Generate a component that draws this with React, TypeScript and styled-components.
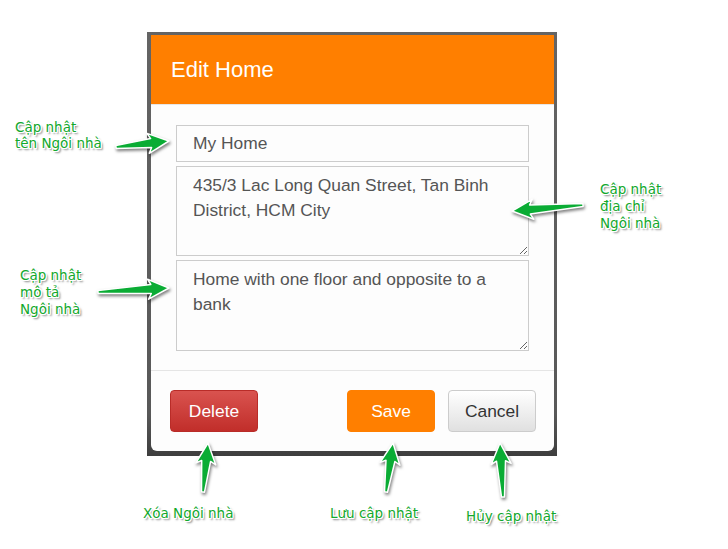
import React from "react";
import styled, { createGlobalStyle } from "styled-components";

const Global = createGlobalStyle`
  html, body { margin: 0; padding: 0; background: #ffffff; }
  body { font-family: "Liberation Sans", Arial, sans-serif; }
`;

const Canvas = styled.div`
  position: relative;
  width: 728px;
  height: 549px;
  overflow: hidden;
`;

const Frame = styled.div`
  margin: 32px 0 0 147px;
  width: 410px;
  box-sizing: border-box;
  background: linear-gradient(#646464, #585858 90%, #3e3e3e);
  padding: 3px 3px 5px 4px;
`;

const Modal = styled.div`
  background: #fdfdfd;
  border-radius: 0 0 6px 6px;
  display: flex;
  flex-direction: column;
`;

const Header = styled.div`
  background: #ff7f00;
  height: 69px;
  border-bottom: 1px solid #e6e6e6;
  display: flex;
  align-items: center;
  padding: 0 20px;
`;

const Title = styled.h2`
  margin: 0;
  color: #ffffff;
  font-weight: normal;
  font-size: 22px;
  font-family: "Liberation Sans", Arial, sans-serif;
`;

const Body = styled.div`
  padding: 20px 25px 19px;
  display: flex;
  flex-direction: column;
  gap: 4px;
  border-bottom: 1px solid #e5e5e5;
`;

const fieldCss = `
  box-sizing: border-box;
  width: 100%;
  border: 1px solid #cccccc;
  background: #fdfdfd;
  color: #555555;
  font-family: "Liberation Sans", Arial, sans-serif;
  font-size: 17.4px;
  line-height: 25px;
  padding: 0 16px;
  outline: none;
`;

const Input = styled.input`
  ${fieldCss}
  height: 37px;
`;

const Area = styled.textarea<{ $h: number }>`
  ${fieldCss}
  height: ${(p) => p.$h}px;
  padding-top: 6px;
  resize: vertical;
  display: block;
`;

const Footer = styled.div`
  padding: 19px 18px 19px 19px;
  display: flex;
  align-items: center;
`;

const Spacer = styled.div`
  flex: 1;
`;

const Btn = styled.button<{ $kind: "danger" | "primary" | "default" }>`
  box-sizing: border-box;
  height: 42px;
  width: 88px;
  border-radius: 4px;
  font-family: "Liberation Sans", Arial, sans-serif;
  font-size: 17.4px;
  cursor: pointer;
  margin-left: ${(p) => (p.$kind === "default" ? "13px" : "0")};
  ${(p) =>
    p.$kind === "danger"
      ? `background: linear-gradient(#d9534f, #c12e2a); border: 1px solid #b92c28; color: #fff;`
      : p.$kind === "primary"
      ? `background: #ff7f00; border: 1px solid #ff7f00; color: #fff;`
      : `background: linear-gradient(#ffffff, #e0e0e0); border: 1px solid #cccccc; color: #333;`}
`;

const Note = styled.div<{ $x: number; $y: number; $lh: number }>`
  position: absolute;
  left: ${(p) => p.$x}px;
  top: ${(p) => p.$y}px;
  line-height: ${(p) => p.$lh}px;
  font-family: "DejaVu Sans", Verdana, sans-serif;
  font-size: 13.5px;
  color: #12a82c;
  white-space: pre;
  text-shadow: -1px 0 #fff, 1px 0 #fff, 0 -1px #fff, 0 1px #fff, -1px -1px #fff,
    1px 1px #fff, -1px 1px #fff, 1px -1px #fff, 2px 2px 2px rgba(0, 0, 0, 0.55);
`;

const Overlay = styled.svg`
  position: absolute;
  left: 0;
  top: 0;
  pointer-events: none;
  filter: drop-shadow(1px 2px 1.5px rgba(0, 0, 0, 0.5));
`;

type Pt = [number, number];

function arrowPoints(a: Pt, b: Pt): string {
  const dx = b[0] - a[0];
  const dy = b[1] - a[1];
  const L = Math.hypot(dx, dy);
  const ux = dx / L;
  const uy = dy / L;
  const nx = -uy;
  const ny = ux;
  const hl = 18;
  const at = (t: number, w: number): string =>
    `${(a[0] + ux * t + nx * w).toFixed(1)},${(a[1] + uy * t + ny * w).toFixed(1)}`;
  return [
    at(0, 1.5),
    at(L - hl, 4.5),
    at(L - hl - 3, 10),
    at(L, 0),
    at(L - hl - 3, -10),
    at(L - hl, -4.5),
    at(0, -1.5),
  ].join(" ");
}

const arrows: [Pt, Pt][] = [
  [[116, 147], [169, 141]],
  [[583, 205], [512, 211]],
  [[98, 292], [169, 288]],
  [[203, 492], [208, 443]],
  [[386, 492], [393, 443]],
  [[503, 497], [500, 443]],
];

export default function App() {
  return (
    <Canvas>
      <Global />
      <Frame>
        <Modal>
          <Header>
            <Title>Edit Home</Title>
          </Header>
          <Body>
            <Input defaultValue="My Home" />
            <Area $h={90} defaultValue="435/3 Lac Long Quan Street, Tan Binh District, HCM City" />
            <Area $h={91} defaultValue="Home with one floor and opposite to a bank" />
          </Body>
          <Footer>
            <Btn $kind="danger">Delete</Btn>
            <Spacer />
            <Btn $kind="primary">Save</Btn>
            <Btn $kind="default">Cancel</Btn>
          </Footer>
        </Modal>
      </Frame>

      <Overlay width={728} height={549}>
        {arrows.map(([a, b], i) => (
          <polygon
            key={i}
            points={arrowPoints(a, b)}
            fill="#0aac34"
            stroke="#ffffff"
            strokeWidth={1.5}
            strokeLinejoin="round"
          />
        ))}
      </Overlay>

      <Note $x={15} $y={119} $lh={16}>{"Cập nhật\ntên Ngôi nhà"}</Note>
      <Note $x={600} $y={181} $lh={17}>{"Cập nhật\nđịa chỉ\nNgôi nhà"}</Note>
      <Note $x={20} $y={267} $lh={17}>{"Cập nhật\nmô tả\nNgôi nhà"}</Note>
      <Note $x={143} $y={505} $lh={17}>{"Xóa Ngôi nhà"}</Note>
      <Note $x={330} $y={505} $lh={17}>{"Lưu cập nhật"}</Note>
      <Note $x={466} $y={508} $lh={17}>{"Hủy cập nhật"}</Note>
    </Canvas>
  );
}
